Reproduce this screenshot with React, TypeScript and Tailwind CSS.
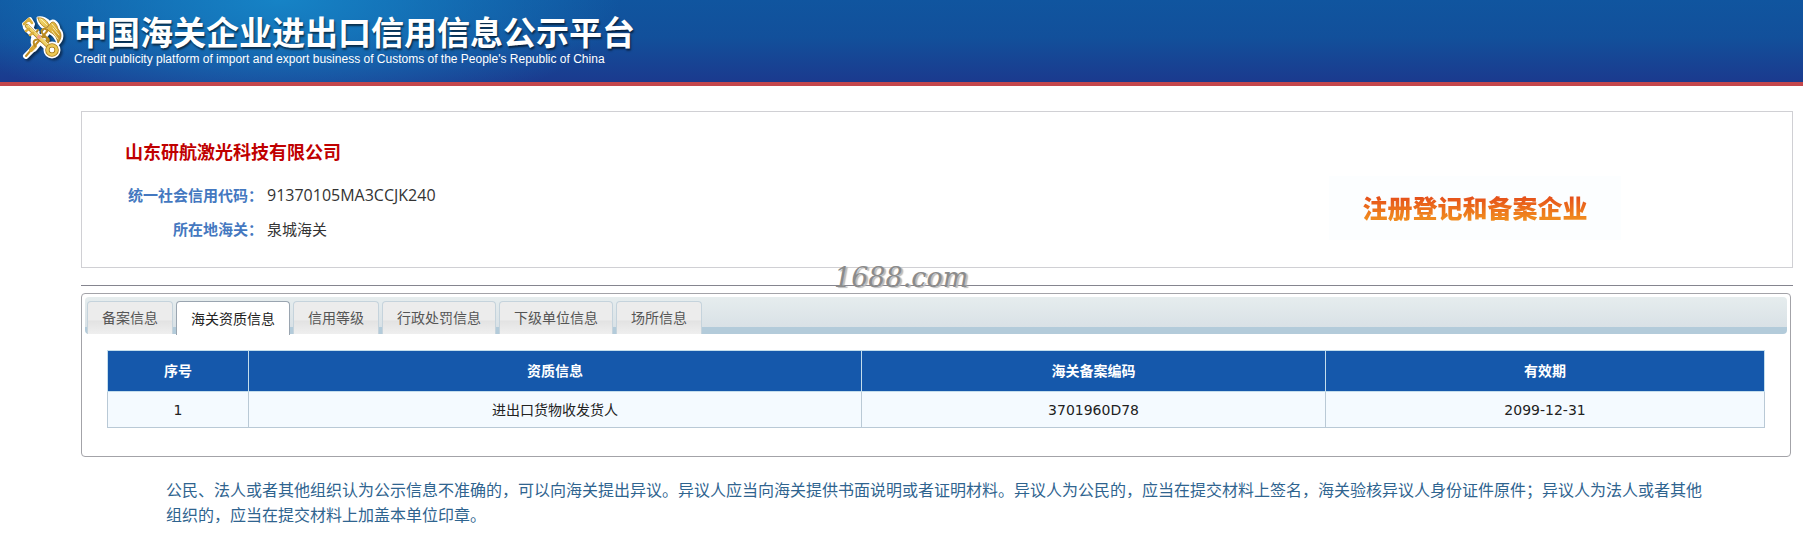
const cjk = "font-['Open_Sans','Noto_Sans_CJK_SC',sans-serif]";

const tabs = [
  "备案信息",
  "海关资质信息",
  "信用等级",
  "行政处罚信息",
  "下级单位信息",
  "场所信息",
];

const columns = [
  { title: "序号", width: "w-[141px]" },
  { title: "资质信息", width: "w-[37%]" },
  { title: "海关备案编码", width: "w-[28%]" },
  { title: "有效期", width: "w-auto" },
];

const rows = [["1", "进出口货物收发货人", "3701960D78", "2099-12-31"]];

const Emblem = () => (
  <svg
    viewBox="0 0 46 46"
    className="w-[46px] h-[46px] shrink-0 drop-shadow-[2px_2px_1px_rgba(0,0,0,0.45)]"
    aria-hidden="true"
  >
    <defs>
      <linearGradient id="gold" x1="0" y1="0" x2="1" y2="1">
        <stop offset="0" stopColor="#f3dc78" />
        <stop offset="0.5" stopColor="#e0b43c" />
        <stop offset="1" stopColor="#c08c20" />
      </linearGradient>
    </defs>
    {/* white rim */}
    <g stroke="#fff" fill="#fff" strokeLinecap="round" strokeLinejoin="round">
      <path d="M6 41 L14 33" strokeWidth="6" />
      <path d="M14 33 L30 13" strokeWidth="7" />
      <path d="M7 12 L29 33" strokeWidth="8" />
      <path d="M4 9 L10 4 L13 9 L10 18 L6 14 Z" strokeWidth="4" />
      <path d="M18 3 C22 2 27 4 30 8 C33 3 38 8 39 14 C43 18 43 24 38 29 C37 23 34 20 29 17 L24 13 C21 11 18 7 18 3 Z" strokeWidth="3" />
      <circle cx="32" cy="35" r="7" strokeWidth="3" />
      <path d="M14 30 C11 24 15 20 17 17" fill="none" strokeWidth="5" />
    </g>
    <g strokeLinecap="round" strokeLinejoin="round">
      {/* staff and snakes */}
      <path d="M6 41 L29 14" stroke="#c08a20" strokeWidth="2" />
      <path d="M11 35 L15 31" stroke="#d9a836" strokeWidth="4" />
      <path
        d="M15 31 C11 25 17 23 21 26 C27 29 29 24 24 20 C19 16 23 12 27 15 M18 15 C13 20 19 22 24 22 C30 22 30 27 26 29"
        fill="none"
        stroke="#b98a1f"
        strokeWidth="2"
      />
      {/* wings */}
      <path
        d="M18 3 C22 2 27 5 29 10 L26 13 C22 11 19 8 18 3 Z M30 9 C33 4 37 9 38 14 C42 18 42 23 38 28 C37 22 34 19 30 17 L27 14 Z"
        fill="url(#gold)"
        stroke="#a97a18"
        strokeWidth="0.8"
      />
      {/* key */}
      <path d="M7 11 L28 31" stroke="#a97a18" strokeWidth="4.4" />
      <path d="M7 11 L28 31" stroke="#efcf62" strokeWidth="3" />
      <path d="M4 9 L9 4 M9 14 L6 16 M13 18 L10 20 M9 4 L12 8" stroke="#dcb03e" strokeWidth="2.6" />
      <circle cx="32" cy="35" r="4.6" fill="none" stroke="#a97a18" strokeWidth="4.4" />
      <circle cx="32" cy="35" r="4.6" fill="none" stroke="#ecc956" strokeWidth="2.8" />
      <circle cx="32" cy="35" r="2" fill="#fff" />
      <path
        d="M8 10 L28 29 M21 4 L27 10 M32 9 L37 15 M33 13 L39 20 M32 16 L38 24"
        fill="none"
        stroke="#fbf3bd"
        strokeWidth="0.9"
      />
      <circle cx="19" cy="22" r="2" fill="#f2a08a" />
    </g>
  </svg>
);

const Header = () => (
  <header className="flex items-start gap-2 h-[86px] pl-5 pt-[15px] border-b-4 border-[#c4474c] bg-[radial-gradient(ellipse_340px_125px_at_280px_0px,#1683c6_0%,#1683c6aa_35%,#1683c600_100%),linear-gradient(to_bottom,#10559f_0%,#12509b_45%,#1b3a8e_100%)]">
    <Emblem />
    <div className="font-['Liberation_Sans','Noto_Sans_CJK_SC',sans-serif] text-white">
      <h1 className="text-[33px] leading-[38px] font-bold [text-shadow:1px_2px_2px_rgba(0,0,0,0.6)]">
        中国海关企业进出口信用信息公示平台
      </h1>
      <p className="text-xs leading-3">
        Credit publicity platform of import and export business of Customs of the People's Republic of China
      </p>
    </div>
  </header>
);

const Company = () => (
  <section className="flex items-start h-[157px] border border-[#d0d0d4]">
    <div className="flex-1 pl-[43px] pt-[26px]">
      <h2 className="text-lg leading-7 font-bold text-[#c00000]">山东研航激光科技有限公司</h2>
      <dl className="grid grid-cols-[138px_1fr] gap-x-1 pt-3 text-[15px] leading-[34px] text-[#333]">
        <dt className="text-right font-bold text-[#4478c0]">统一社会信用代码：</dt>
        <dd className="text-base leading-[34px]">91370105MA3CCJK240</dd>
        <dt className="text-right font-bold text-[#4478c0]">所在地海关：</dt>
        <dd>泉城海关</dd>
      </dl>
    </div>
    <div className="mt-16 mr-[171px] w-[292px] h-16 flex items-center justify-center bg-[#fcfeff]">
      <strong className="text-[25px] leading-9 font-black text-transparent bg-clip-text bg-linear-to-b from-[#e5501a] from-20% to-[#f08a1e] to-80%">
        注册登记和备案企业
      </strong>
    </div>
  </section>
);

const Tabs = () => (
  <div
    role="tablist"
    className="flex gap-[3px] h-[37px] pl-0.5 pt-1 rounded-[4px] bg-[linear-gradient(to_bottom,#e6edee_0px,#d9e1e6_30px,#b3cbda_30px)]"
  >
    {tabs.map((tab, i) => (
      <button
        key={tab}
        role="tab"
        aria-selected={i === 1}
        className={
          i === 1
            ? "h-[34px] px-3.5 rounded-t-[4px] border border-b-0 border-[#9aa5b0] bg-white text-sm text-[#222]"
            : "h-[33px] px-3.5 rounded-t-[4px] border border-b-0 border-[#c5d3dc] bg-[linear-gradient(to_bottom,#ececec_55%,#e3e3e3_60%,#efefef_100%)] text-sm text-[#555]"
        }
      >
        {tab}
      </button>
    ))}
  </div>
);

const Qualifications = () => (
  <table className="w-full table-fixed border-collapse text-sm text-center">
    <thead>
      <tr className="h-[41px] bg-[#1558ab] text-white">
        {columns.map((col) => (
          <th key={col.title} className={`${col.width} border border-[#c3ddec] font-bold`}>
            {col.title}
          </th>
        ))}
      </tr>
    </thead>
    <tbody className="font-['DejaVu_Sans','Noto_Sans_CJK_SC',sans-serif] text-[#222]">
      {rows.map((row) => (
        <tr key={row[0]} className="h-9 bg-[#f4faff]">
          {row.map((cell) => (
            <td key={cell} className="border border-[#b9c9d6]">
              {cell}
            </td>
          ))}
        </tr>
      ))}
    </tbody>
  </table>
);

export default function App() {
  return (
    <div className={`min-h-screen bg-white ${cjk}`}>
      <Header />
      <main className="pl-[81px] pr-2.5 pt-[25px]">
        <Company />
        <div className="relative mt-[17px] border-t border-[#85858f]">
          <span className="absolute left-1/2 -top-6 -translate-x-[103px] font-['DejaVu_Serif',serif] text-[27px] leading-8 italic text-[#8b8b8b] [text-shadow:2px_1px_1px_#bbb]">
            1688.com
          </span>
        </div>
        <section className="mt-[7px] mr-0.5 p-[3px] pb-7 rounded-[4px] border border-[#a3a3a8]">
          <Tabs />
          <div className="px-[22px] pt-4">
            <Qualifications />
          </div>
        </section>
        <p className="px-[85px] pt-[21px] text-base leading-[25px] text-[#2f648f]">
          公民、法人或者其他组织认为公示信息不准确的，可以向海关提出异议。异议人应当向海关提供书面说明或者证明材料。异议人为公民的，应当在提交材料上签名，海关验核异议人身份证件原件；异议人为法人或者其他组织的，应当在提交材料上加盖本单位印章。
        </p>
      </main>
    </div>
  );
}
